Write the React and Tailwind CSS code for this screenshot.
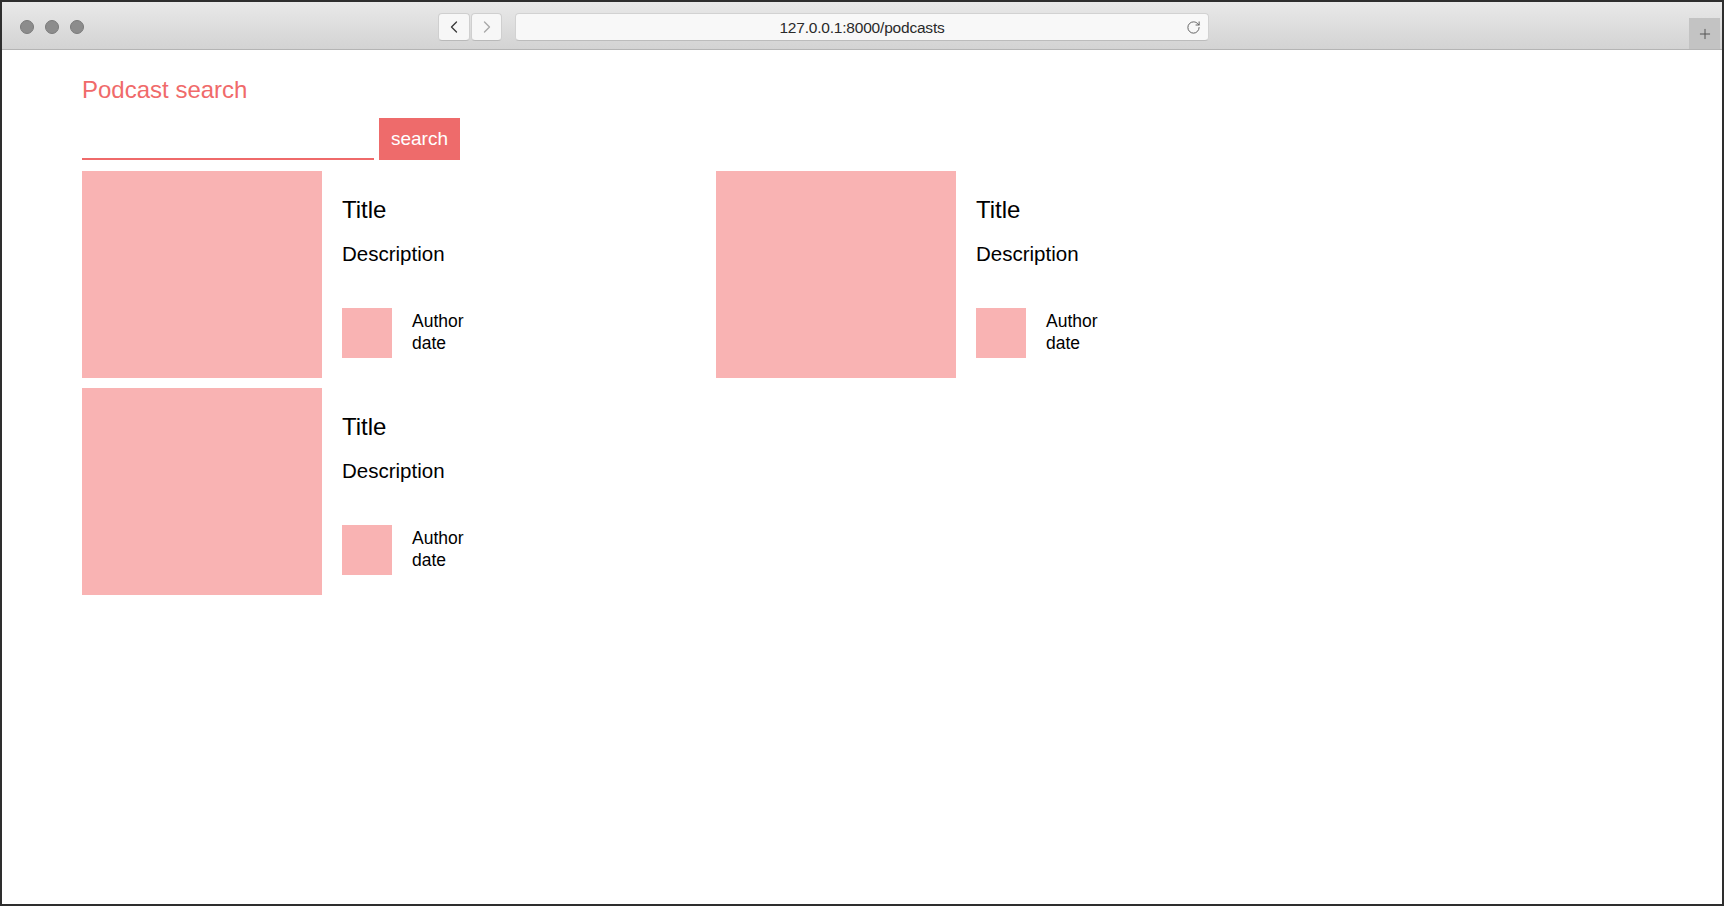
import React from "react";
import { ChevronLeft, ChevronRight, RotateCw, Plus } from "lucide-react";

const font = { fontFamily: '"Liberation Sans", Arial, sans-serif' };

function Card() {
  return (
    <div className="flex">
      <div className="w-[240px] h-[207px] bg-[#f9b3b3] shrink-0" />
      <div className="ml-[20px] flex flex-col text-black">
        <div className="pt-[25px] text-[24px] leading-[28px]">Title</div>
        <div className="mt-[18px] text-[20.5px] leading-[24px]">Description</div>
        <div className="mt-[42px] flex items-start">
          <div className="w-[50px] h-[50px] bg-[#f9b3b3] shrink-0" />
          <div className="ml-[20px] mt-[2px] text-[17.5px] leading-[22px]">
            <div>Author</div>
            <div>date</div>
          </div>
        </div>
      </div>
    </div>
  );
}

export default function App() {
  return (
    <div
      className="w-[1724px] h-[906px] box-border border-2 border-[#2e2e2e] bg-white flex flex-col overflow-hidden"
      style={font}
    >
      {/* toolbar */}
      <div className="h-[48px] shrink-0 flex items-start border-b border-[#b4b4b4] bg-gradient-to-b from-[#e9e9e9] to-[#d3d3d3]">
        <div className="ml-[18px] mt-[18px] flex gap-[11px]">
          <div className="w-[14px] h-[14px] rounded-full bg-[#8c8c8c] border border-[#7a7a7a]" />
          <div className="w-[14px] h-[14px] rounded-full bg-[#8c8c8c] border border-[#7a7a7a]" />
          <div className="w-[14px] h-[14px] rounded-full bg-[#8c8c8c] border border-[#7a7a7a]" />
        </div>
        <div className="ml-[354px] mt-[11px] flex gap-px">
          <div className="w-[32px] h-[28px] rounded-[4px] bg-[#f7f7f7] border border-[#cfcfcf] border-b-[#b9b9b9] flex items-center justify-center">
            <ChevronLeft size={20} strokeWidth={1.6} color="#3a3a3a" />
          </div>
          <div className="w-[31px] h-[28px] rounded-[4px] bg-[#f7f7f7] border border-[#cfcfcf] border-b-[#b9b9b9] flex items-center justify-center">
            <ChevronRight size={20} strokeWidth={1.6} color="#a8a8a8" />
          </div>
        </div>
        <div className="ml-[13px] mt-[11px] w-[694px] h-[28px] rounded-[4px] bg-[#f8f8f8] border border-[#d2d2d2] border-b-[#bcbcbc] relative flex items-center justify-center">
          <span className="pt-[2px] text-[15.5px] text-[#2a2a2a] tracking-[-0.2px]">127.0.0.1:8000/podcasts</span>
          <div className="absolute right-[7px] top-[6px]">
            <RotateCw size={15} strokeWidth={1.5} color="#5a5a5a" />
          </div>
        </div>
        <div className="flex-1" />
        <div className="self-end mr-[2px] w-[31px] h-[31px] bg-[#c3c3c3] flex items-center justify-center">
          <Plus size={16} strokeWidth={1.5} color="#555" />
        </div>
      </div>

      {/* content */}
      <div className="pl-[80px] pt-[22px]">
        <h1 className="text-[24px] leading-[36px] text-[#f06a6a]">Podcast search</h1>
        <div className="mt-[10px] flex">
          <input
            className="w-[292px] h-[42px] border-b-2 border-[#ef6a6a] outline-none bg-transparent"
            type="text"
          />
          <button className="ml-[5px] w-[81px] h-[42px] bg-[#ee6b6b] text-white text-[19px] leading-[42px]">
            search
          </button>
        </div>
        <div className="mt-[11px] grid grid-cols-[634px_634px] gap-y-[10px]">
          <Card />
          <Card />
          <Card />
        </div>
      </div>
    </div>
  );
}
